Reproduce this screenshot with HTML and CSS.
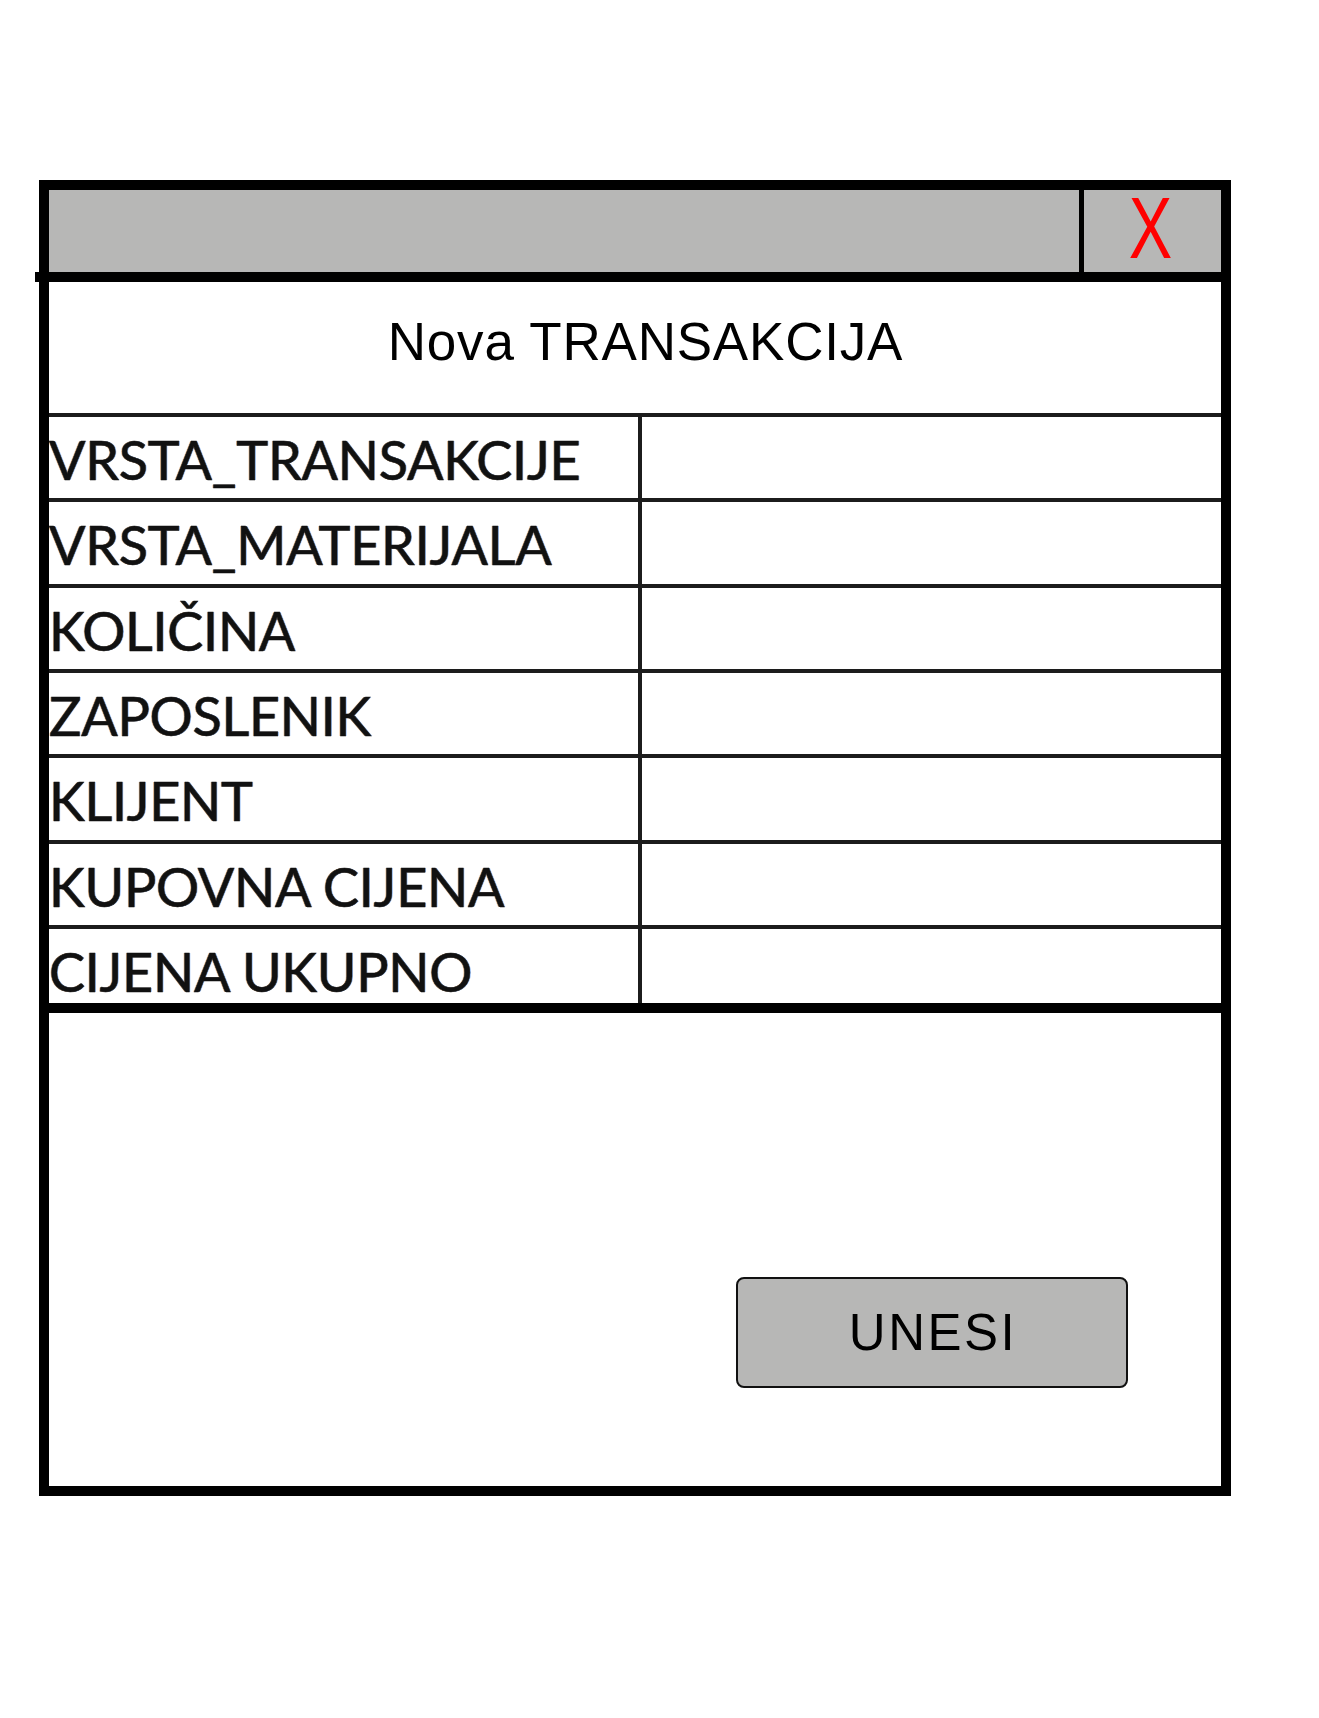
FILE: index.html
```html
<!DOCTYPE html>
<html lang="hr">
<head>
<meta charset="utf-8">
<title>Nova TRANSAKCIJA</title>
<link rel="stylesheet" href="styles.css">
</head>
<body>
<div class="page">
  <div class="window">
    <div class="titlebar">
      <div class="titlebar-fill"></div>
      <div class="close"><span class="close-x">X</span></div>
    </div>
    <div class="divider"></div>
    <div class="heading">Nova TRANSAKCIJA</div>
    <div class="table">
      <div class="row"><div class="label">VRSTA_TRANSAKCIJE</div><div class="value"></div></div>
      <div class="row"><div class="label">VRSTA_MATERIJALA</div><div class="value"></div></div>
      <div class="row"><div class="label">KOLIČINA</div><div class="value"></div></div>
      <div class="row"><div class="label">ZAPOSLENIK</div><div class="value"></div></div>
      <div class="row"><div class="label">KLIJENT</div><div class="value"></div></div>
      <div class="row"><div class="label">KUPOVNA CIJENA</div><div class="value"></div></div>
      <div class="row row-last"><div class="label">CIJENA UKUPNO</div><div class="value"></div></div>
    </div>
    <div class="actions">
      <button class="btn" type="button">UNESI</button>
    </div>
  </div>
</div>
</body>
</html>
```

FILE: styles.css
```css
html, body {
  margin: 0;
  padding: 0;
  background: #ffffff;
}

.page {
  padding: 180px 0 0 39px;
}

.window {
  box-sizing: border-box;
  width: 1192px;
  height: 1316px;
  border: 10px solid #000;
  background: #fff;
  display: flex;
  flex-direction: column;
}

.titlebar {
  height: 82px;
  background: #b7b7b6;
  display: flex;
}

.titlebar-fill {
  flex: 1;
}

.close {
  width: 137px;
  border-left: 5px solid #000;
  display: flex;
  align-items: flex-start;
  justify-content: center;
}

.close-x {
  display: inline-block;
  font-family: "Liberation Sans", Arial, sans-serif;
  font-size: 88px;
  line-height: 76px;
  color: #ff0000;
  transform: scaleX(0.74);
  margin-left: -4px;
}

.divider {
  height: 10px;
  background: #000;
  margin-left: -14px;
}

.heading {
  box-sizing: border-box;
  height: 131px;
  padding: 33px 0 0 21px;
  text-align: center;
  font-family: "Liberation Sans", Arial, sans-serif;
  font-size: 53px;
  line-height: 53px;
  letter-spacing: 0.8px;
  color: #000;
}

.table {
  border-bottom: 10px solid #000;
}

.row {
  box-sizing: border-box;
  height: 85.33px;
  border-top: 4px solid #1c1c1c;
  display: flex;
}

.row-last {
  height: 78px;
}

.label {
  box-sizing: border-box;
  width: 593px;
  border-right: 4px solid #1c1c1c;
  padding: 11px 0 0 0;
  font-family: Lato, "Open Sans", sans-serif;
  font-size: 54px;
  line-height: 1.2;
  letter-spacing: -0.3px;
  color: #111;
  -webkit-text-stroke: 0.5px #111;
  text-shadow: -1px 0 0 rgba(200, 110, 20, 0.45), 1px 0 0 rgba(40, 120, 230, 0.45);
  white-space: nowrap;
  overflow: hidden;
}

.value {
  flex: 1;
}

.actions {
  flex: 1;
  display: flex;
  justify-content: flex-end;
  align-items: flex-start;
  padding: 264px 93px 0 0;
}

.btn {
  box-sizing: border-box;
  width: 392px;
  height: 111px;
  border: 2px solid #111;
  border-radius: 8px;
  background: #b7b7b6;
  font-family: "Liberation Sans", Arial, sans-serif;
  font-size: 51px;
  letter-spacing: 2.5px;
  color: #000;
  padding: 0 0 0 2px;
  margin: 0;
}
```
